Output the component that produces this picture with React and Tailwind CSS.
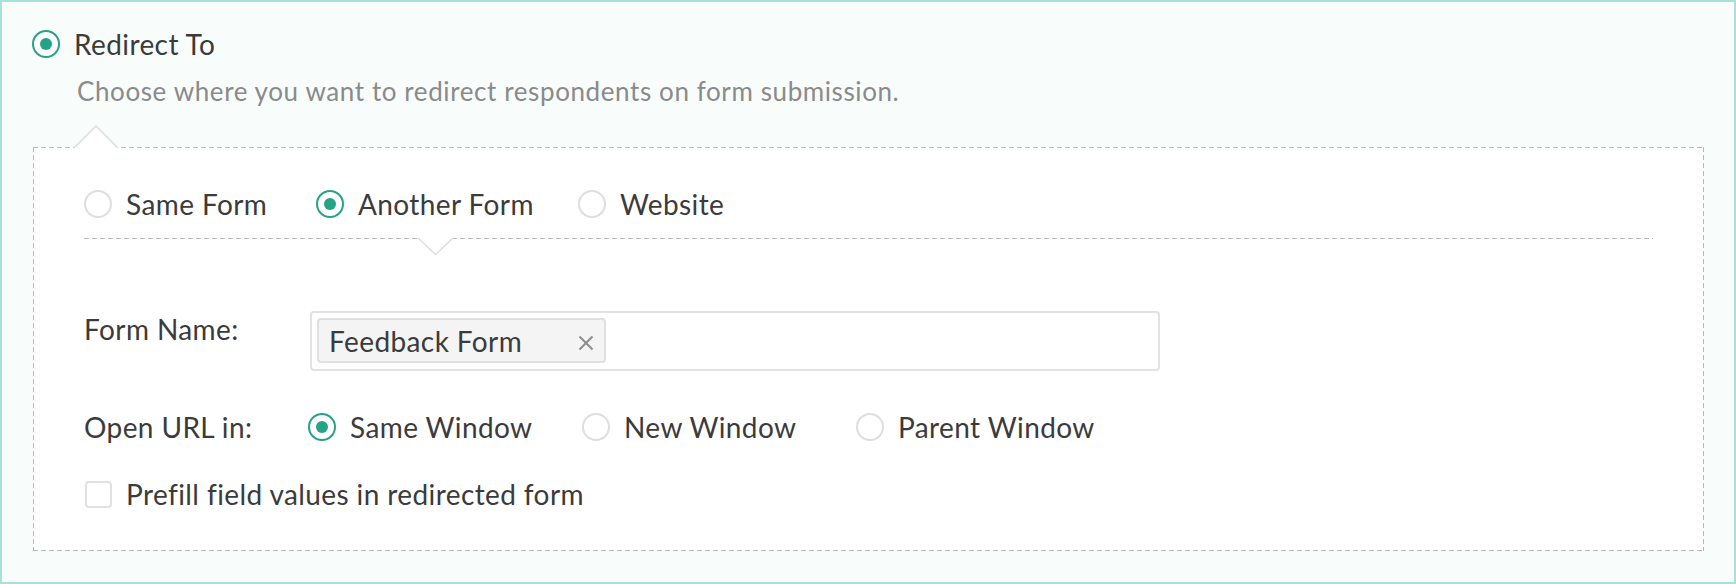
import React, { useState } from "react";

function Radio({ checked, label, onClick, className = "" }) {
  return (
    <div className={`flex items-center cursor-pointer ${className}`} onClick={onClick}>
      <span
        className={`flex h-[28px] w-[28px] shrink-0 items-center justify-center rounded-full border-2 bg-white ${
          checked ? "border-[#25a386]" : "border-[#dedede]"
        }`}
      >
        {checked && <span className="h-[12px] w-[12px] rounded-full bg-[#25a386]" />}
      </span>
      <span className="ml-[14px] text-[28px] leading-[36px] tracking-[0.4px] text-[#3b3b3b]">{label}</span>
    </div>
  );
}

export default function App() {
  const [target, setTarget] = useState("another");
  const [win, setWin] = useState("same");
  const [prefill, setPrefill] = useState(false);

  return (
    <div className="h-[584px] w-[1736px] border-2 border-[#a8e1d5] bg-[#f8fdfc] pl-[30px] pr-[30px] pt-[24px] font-[Lato,sans-serif]">
      {/* header */}
      <Radio checked label="Redirect To" />
      <p className="mt-[14px] pl-[45px] text-[26px] leading-[30px] tracking-[0.6px] text-[#8a8a8a]">
        Choose where you want to redirect respondents on form submission.
      </p>

      {/* dashed panel */}
      <div className="relative ml-[1px] mt-[41px] h-[404px] bg-white px-[51px] pt-[39px] [background-image:linear-gradient(90deg,#b8b8b8_5px,transparent_5px),linear-gradient(90deg,#b8b8b8_5px,transparent_5px),linear-gradient(#b8b8b8_5px,transparent_5px),linear-gradient(#b8b8b8_5px,transparent_5px)] [background-size:8px_1px,8px_1px,1px_8px,1px_8px] [background-position:0_0,0_100%,0_0,100%_0] [background-repeat:repeat-x,repeat-x,repeat-y,repeat-y]">
        <svg className="absolute left-[40px] top-[-22px]" width="46" height="24" viewBox="0 0 46 24">
          <polygon points="1,23 23,1 45,23" fill="#ffffff" />
          <polyline points="1,23 23,1 45,23" fill="none" stroke="#dedede" strokeWidth="1.5" />
        </svg>

        <div className="flex">
          <Radio className="w-[232px]" checked={target === "same"} label="Same Form" onClick={() => setTarget("same")} />
          <Radio className="w-[262px]" checked={target === "another"} label="Another Form" onClick={() => setTarget("another")} />
          <Radio checked={target === "website"} label="Website" onClick={() => setTarget("website")} />
        </div>

        <div className="relative mt-[16px] h-[1px] bg-[linear-gradient(90deg,#b8b8b8_5px,transparent_5px)] bg-[length:8px_1px] bg-repeat-x">
          <svg className="absolute left-[333px] top-[-1px]" width="37" height="19" viewBox="0 0 37 19">
            <polygon points="1,1 18.5,17.5 36,1" fill="#ffffff" />
            <polyline points="1,1 18.5,17.5 36,1" fill="none" stroke="#dedede" strokeWidth="1.5" />
          </svg>
        </div>

        <div className="mt-[72px] flex">
          <div className="w-[226px] text-[28px] leading-[36px] tracking-[0.4px] text-[#3b3b3b]">Form Name:</div>
          <div className="flex h-[60px] w-[850px] items-start rounded-[4px] border-2 border-[#e2e2e2] bg-white pl-[5px] pt-[5px]">
            <div className="flex h-[45px] w-[289px] items-center rounded-[4px] border-2 border-[#e0e0e0] bg-[#f4f4f4] pl-[10px] pr-[10px]">
              <span className="flex-1 text-[28px] leading-[36px] tracking-[0.4px] text-[#3b3b3b]">Feedback Form</span>
              <svg width="16" height="16" viewBox="0 0 16 16" className="mt-[4px]">
                <path d="M1.5 1.5 L14.5 14.5 M14.5 1.5 L1.5 14.5" stroke="#8c8c8c" strokeWidth="2" />
              </svg>
            </div>
          </div>
        </div>

        <div className="mt-[38px] flex">
          <div className="w-[224px] text-[28px] leading-[36px] tracking-[0.4px] text-[#3b3b3b]">Open URL in:</div>
          <Radio className="w-[274px]" checked={win === "same"} label="Same Window" onClick={() => setWin("same")} />
          <Radio className="w-[274px]" checked={win === "new"} label="New Window" onClick={() => setWin("new")} />
          <Radio checked={win === "parent"} label="Parent Window" onClick={() => setWin("parent")} />
        </div>

        <div className="mt-[31px] flex items-center cursor-pointer" onClick={() => setPrefill(!prefill)}>
          <span className="ml-[1px] flex h-[27px] w-[27px] items-center justify-center rounded-[4px] border-2 border-[#e0e0e0] bg-white">
            {prefill && <span className="h-[12px] w-[12px] bg-[#25a386]" />}
          </span>
          <span className="ml-[14px] text-[28px] leading-[36px] tracking-[0.4px] text-[#3b3b3b]">
            Prefill field values in redirected form
          </span>
        </div>
      </div>
    </div>
  );
}
